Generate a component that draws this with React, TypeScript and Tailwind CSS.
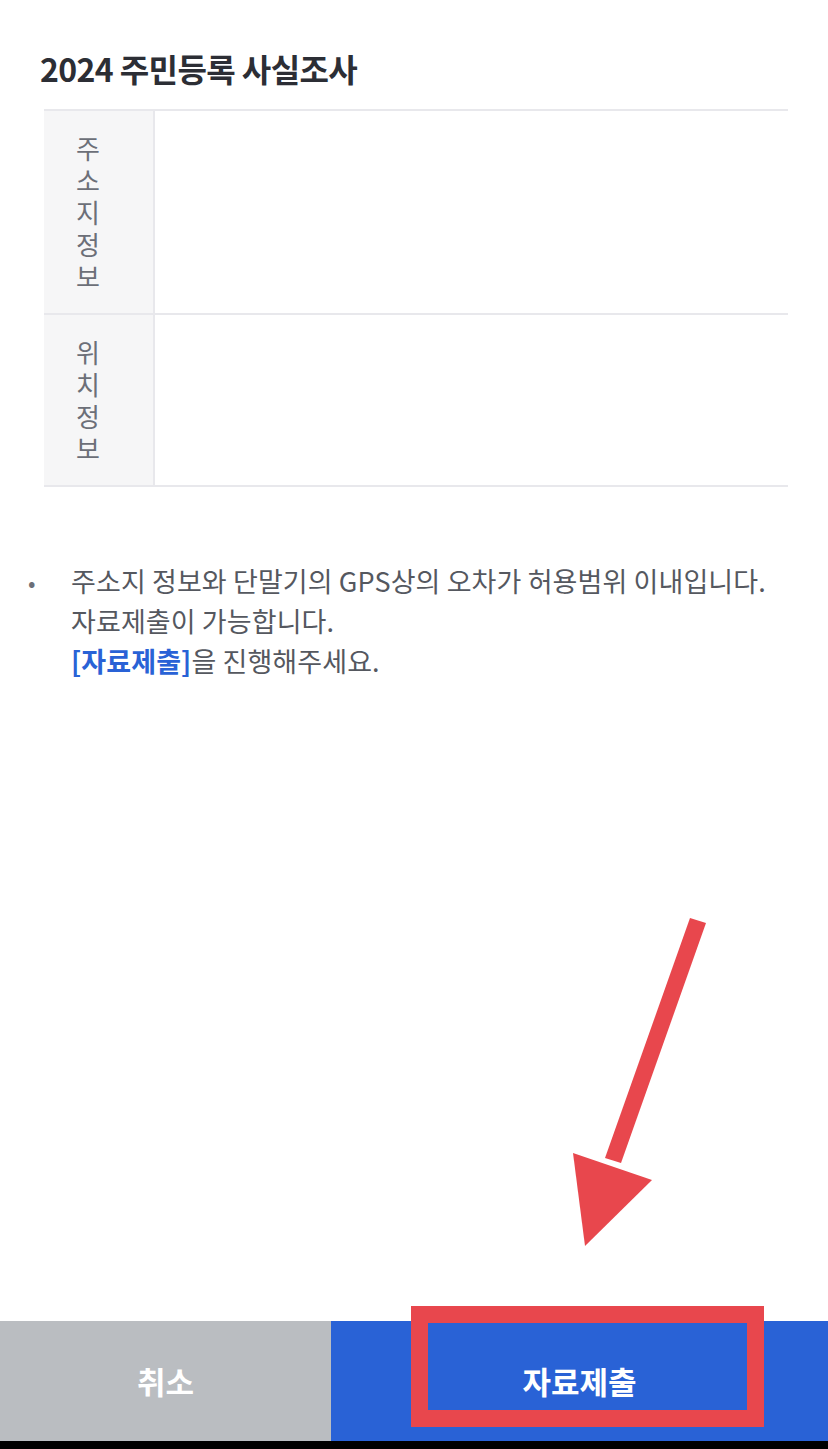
import React from "react";

const font = { fontFamily: '"Noto Sans CJK KR", "Noto Sans", sans-serif' };

function VLabel({ text }: { text: string }) {
  return (
    <div className="w-[111px] shrink-0 bg-[#f6f6f7] border-r-2 border-[#e8e8ec] flex items-center pl-[32px]">
      <p className="w-[28px] text-[26px] leading-[32px] text-[#6c6f78] break-all">{text}</p>
    </div>
  );
}

export default function App() {
  return (
    <div className="relative w-[828px] h-[1449px] bg-white flex flex-col overflow-hidden" style={font}>
      <div className="flex-1">
        <h1 className="pl-[40px] pt-[48px] text-[32px] leading-[40px] font-bold text-[#2c2e35] tracking-[-0.6px]">
          2024 주민등록 사실조사
        </h1>
        <div className="mt-[21px] ml-[44px] w-[744px] border-t-2 border-b-2 border-[#e8e8ec]">
          <div className="flex h-[204px] border-b-2 border-[#e8e8ec]">
            <VLabel text="주소지정보" />
            <div className="flex-1" />
          </div>
          <div className="flex h-[170px]">
            <VLabel text="위치정보" />
            <div className="flex-1" />
          </div>
        </div>
        <div className="mt-[74px] flex pl-[28px] pr-[4px]">
          <span className="w-[43px] text-[22px] leading-[40px] text-[#6c6f78]">•</span>
          <p className="text-[27px] leading-[40px] text-[#55585f] tracking-[0.1px]">
            주소지 정보와 단말기의 GPS상의 오차가 허용범위 이내입니다.
            <br />
            자료제출이 가능합니다.
            <br />
            <span className="font-bold text-[#2962d6]">[자료제출]</span>을 진행해주세요.
          </p>
        </div>
      </div>
      <div className="flex h-[120px]">
        <div className="w-[331px] bg-[#babdc1] flex items-center justify-center text-white text-[31px] font-bold">
          취소
        </div>
        <div className="flex-1 bg-[#2962d6] flex items-center justify-center text-white text-[31px] font-bold">
          자료제출
        </div>
      </div>
      <div className="h-[8px] bg-black" />
      <div className="absolute left-[411px] top-[1306px] w-[353px] h-[121px] border-[17px] border-[#e8474d]" />
      <svg className="absolute left-0 top-0" width="828" height="1449" viewBox="0 0 828 1449">
        <polygon points="690,918 706,923 621,1163 605,1158" fill="#e8474d" />
        <polygon points="573,1153 652,1180 585,1246" fill="#e8474d" />
      </svg>
    </div>
  );
}
